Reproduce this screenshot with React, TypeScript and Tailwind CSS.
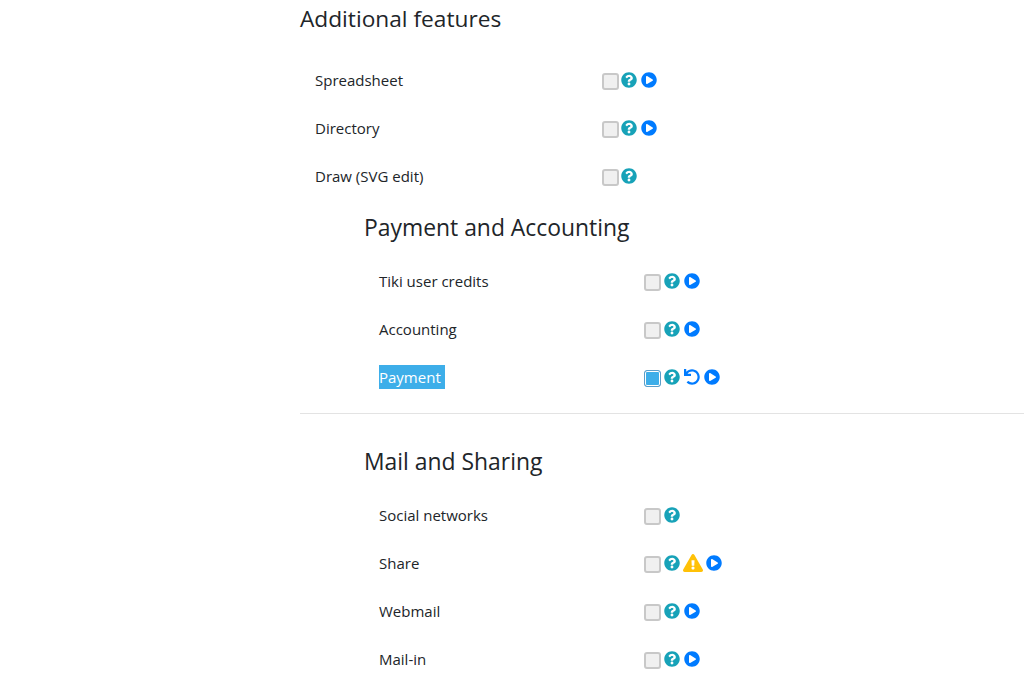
import { FaExclamationTriangle, FaPlayCircle, FaQuestionCircle, FaUndo } from 'react-icons/fa'

type Feature = {
  label: string
  docs?: boolean
  checked?: boolean
  warning?: boolean
}

const additional: Feature[] = [
  { label: 'Spreadsheet', docs: true },
  { label: 'Directory', docs: true },
  { label: 'Draw (SVG edit)' },
]

const payment: Feature[] = [
  { label: 'Tiki user credits', docs: true },
  { label: 'Accounting', docs: true },
  { label: 'Payment', docs: true, checked: true },
]

const mail: Feature[] = [
  { label: 'Social networks' },
  { label: 'Share', docs: true, warning: true },
  { label: 'Webmail', docs: true },
  { label: 'Mail-in', docs: true },
]

function FeatureRow({ feature, nested }: { feature: Feature; nested?: boolean }) {
  return (
    <div className="flex h-[48px] items-center pl-[15px]">
      <div className={nested ? 'w-[265px]' : 'w-[287px]'}>
        <span className={feature.checked ? 'inline-block w-[66px] bg-[#3daee9] text-white' : ''}>{feature.label}</span>
      </div>
      <div className="flex items-center">
        <span
          className={
            feature.checked
              ? 'mt-[3px] h-[17px] w-[17px] rounded-[3px] border border-[#5b9ec9] bg-[#3daee9] shadow-[inset_0_0_0_1px_#ffffff]'
              : 'mt-[3px] h-[17px] w-[17px] rounded-[3px] border-2 border-[#c8c8c8] bg-[#f0f0f0]'
          }
        />
        <FaQuestionCircle className={nested ? 'ml-[3px] text-[16px] text-[#17a2b8]' : 'ml-[2px] text-[16px] text-[#17a2b8]'} />
        {feature.checked && <FaUndo className="ml-[4px] text-[16px] text-[#007bff]" />}
        {feature.warning && <FaExclamationTriangle className="ml-[3px] text-[20px] text-[#ffc107]" />}
        {feature.docs && <FaPlayCircle className={feature.warning ? 'ml-[3px] text-[16px] text-[#007bff]' : 'ml-[4px] text-[16px] text-[#007bff]'} />}
      </div>
    </div>
  )
}

export default function App() {
  return (
    <div
      className="h-[680px] overflow-hidden bg-white pl-[300px] text-[15px] leading-[24px] text-[#212529]"
      style={{ fontFamily: '"Open Sans", "Noto Sans", sans-serif' }}
    >
      <h2 className="pt-[4px] text-[22.7px] leading-[30px]">Additional features</h2>
      <div className="mt-[22px]">
        {additional.map((f) => (
          <FeatureRow key={f.label} feature={f} />
        ))}
      </div>

      <div className="ml-[64px] mt-[13px]">
        <h3 className="text-[22.9px] leading-[30px]">Payment and Accounting</h3>
        <div className="mt-[14px]">
          {payment.map((f) => (
            <FeatureRow key={f.label} feature={f} nested />
          ))}
        </div>
      </div>

      <hr className="mt-[12px] border-t border-[#e3e3e3]" />

      <div className="ml-[64px] mt-[33px]">
        <h3 className="text-[22.9px] leading-[30px]">Mail and Sharing</h3>
        <div className="mt-[14px]">
          {mail.map((f) => (
            <FeatureRow key={f.label} feature={f} nested />
          ))}
        </div>
      </div>
    </div>
  )
}
